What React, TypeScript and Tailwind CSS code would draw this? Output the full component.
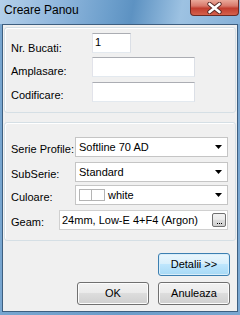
import React from "react";

const font = { fontFamily: '"Liberation Sans", Arial, sans-serif' };

function TextBox({ w, value }: { w: string; value?: string }) {
  return (
    <div
      className={`${w} h-[20px] bg-white border border-[#abadb3] border-l-[#e2e3ea] border-r-[#dbdfe6] border-b-[#e3e9ef] px-[2px] text-[11px] leading-[16px] text-black`}
    >
      {value}
    </div>
  );
}

function Combo({ children }: { children: React.ReactNode }) {
  return (
    <div className="w-[153px] h-[20px] bg-white border border-[#c5c5c5] flex items-center pl-[3px] pr-[5px] text-[11px] text-black">
      <div className="flex-1 flex items-center">{children}</div>
      <svg width="7" height="4" viewBox="0 0 7 4">
        <path d="M0 0H7L3.5 4Z" fill="#000" />
      </svg>
    </div>
  );
}

function Btn({ label, hot }: { label: string; hot?: boolean }) {
  return (
    <div
      className={`w-[72px] h-[23px] rounded-[3px] border flex items-center justify-center text-[11px] text-black ${
        hot
          ? "border-[#3c7fb1] bg-[linear-gradient(#eaf6fd_0%,#d9f0fc_45%,#bee6fd_50%,#a7d9f5_100%)] shadow-[inset_0_0_0_1px_#d9eefa]"
          : "border-[#707070] bg-[linear-gradient(#f2f2f2_0%,#ebebeb_45%,#dddddd_50%,#cfcfcf_100%)] shadow-[inset_0_0_0_1px_#fcfcfc]"
      }`}
    >
      {label}
    </div>
  );
}

export default function App() {
  return (
    <div
      className="w-[240px] h-[315px] flex flex-col bg-[linear-gradient(90deg,#78a6d0,#6b9cc9_50%,#7aa7d1)]"
      style={font}
    >
      {/* title bar */}
      <div className="h-[24px] flex items-start relative bg-[linear-gradient(100deg,#b4d0ea_0%,#8fb6dc_25%,#6d9fcc_45%,#5d92c2_55%,#9dc2e2_75%,#86b1d8_100%)]">
        <span className="pl-[4px] pt-[3px] text-[12px] text-black leading-[14px]">Creare Panou</span>
        <div className="absolute right-[1px] top-0 w-[49px] h-[16px] rounded-b-[4px] border border-t-0 border-[#6b2a24] bg-[linear-gradient(#eaa99a_0%,#d8786a_40%,#c23d2e_55%,#d5614c_100%)] flex items-center justify-center">
          <svg width="15" height="12" viewBox="0 0 15 12">
            <path d="M2.5 2L12.5 10M12.5 2L2.5 10" stroke="#5a2a26" strokeWidth="4.4" strokeLinecap="round" />
            <path d="M2.5 2L12.5 10M12.5 2L2.5 10" stroke="#fff" strokeWidth="2.6" strokeLinecap="round" />
          </svg>
        </div>
      </div>

      {/* client area */}
      <div className="mx-[2px] mb-[3px] flex-1 border border-[#3e5f80] bg-[#f0f0f0] flex flex-col px-[1px] pt-[2px]">
        {/* group 1 */}
        <div className="h-[86px] rounded-[3px] border border-[#d5dfe5] shadow-[inset_1px_1px_0_#fff] flex flex-col pt-[5px] pl-[6px]">
          <div className="flex items-start h-[20px]">
            <span className="w-[81px] text-[11px] leading-[13px] mt-[9px]">Nr. Bucati:</span>
            <TextBox w="w-[39px]" value="1" />
          </div>
          <div className="flex items-start h-[20px] mt-[4px]">
            <span className="w-[81px] text-[11px] leading-[13px] mt-[8px]">Amplasare:</span>
            <TextBox w="w-[103px]" />
          </div>
          <div className="flex items-start h-[20px] mt-[5px]">
            <span className="w-[81px] text-[11px] leading-[13px] mt-[7px]">Codificare:</span>
            <TextBox w="w-[103px]" />
          </div>
        </div>

        {/* group 2 */}
        <div className="mt-[9px] h-[119px] rounded-[3px] border border-[#d5dfe5] shadow-[inset_1px_1px_0_#fff] flex flex-col pt-[14px] pl-[6px]">
          <div className="flex items-start h-[20px]">
            <span className="w-[64px] text-[11px] leading-[13px] mt-[6px]">Serie Profile:</span>
            <Combo>Softline 70 AD</Combo>
          </div>
          <div className="flex items-start h-[20px] mt-[5px]">
            <span className="w-[64px] text-[11px] leading-[13px] mt-[6px]">SubSerie:</span>
            <Combo>Standard</Combo>
          </div>
          <div className="flex items-start h-[20px] mt-[3px]">
            <span className="w-[64px] text-[11px] leading-[13px] mt-[6px]">Culoare:</span>
            <Combo>
              <span className="flex">
                <span className="w-[13px] h-[12px] border border-[#b4b4b4] bg-white" />
                <span className="w-[13px] h-[12px] border border-[#b4b4b4] border-l-0 bg-white" />
              </span>
              <span className="ml-[3px]">white</span>
            </Combo>
          </div>
          <div className="flex items-start h-[20px] mt-[5px]">
            <span className="w-[48px] text-[11px] leading-[13px] mt-[6px]">Geam:</span>
            <div className="w-[169px] h-[20px] bg-white border border-[#d0d0d0] flex items-center pl-[2px] pr-[1px] text-[11px]">
              <span className="flex-1">24mm, Low-E 4+F4 (Argon)</span>
              <div className="w-[14px] h-[14px] rounded-[2px] border border-[#707070] bg-[linear-gradient(#f2f2f2,#ebebeb_45%,#dddddd_50%,#cfcfcf)] flex items-end justify-center pb-[2px]">
                <span className="flex gap-[1px]">
                  <span className="w-[1px] h-[1px] bg-black" />
                  <span className="w-[1px] h-[1px] bg-black" />
                  <span className="w-[1px] h-[1px] bg-black" />
                </span>
              </div>
            </div>
          </div>
        </div>

        {/* buttons */}
        <div className="flex justify-end pr-[6px] mt-[12px]">
          <Btn label="Detalii >>" hot />
        </div>
        <div className="flex justify-end gap-[9px] pr-[6px] mt-[6px]">
          <Btn label="OK" />
          <Btn label="Anuleaza" />
        </div>
      </div>
    </div>
  );
}
